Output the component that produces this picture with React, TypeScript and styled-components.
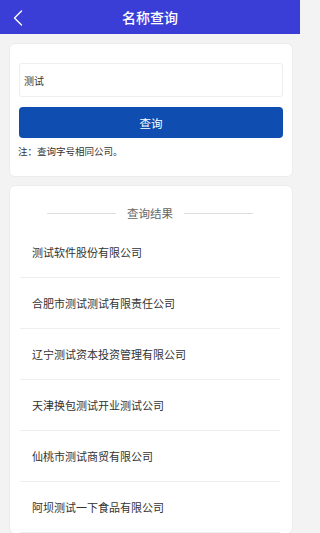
import React from "react";
import styled, { createGlobalStyle } from "styled-components";

const Global = createGlobalStyle`
  html, body { margin: 0; padding: 0; background: #f3f3f3; overflow: hidden; }
  body { font-family: "Noto Sans CJK SC", "Noto Sans", sans-serif; }
  * { box-sizing: border-box; }
`;

const Page = styled.div`
  width: 300px;
  height: 533px;
  overflow: hidden;
  background: #f3f3f3;
`;

const Header = styled.header`
  height: 34px;
  background: #3a3ed6;
  display: flex;
  align-items: center;
  justify-content: center;
  position: relative;
`;

const Back = styled.button`
  position: absolute;
  left: 10px;
  top: 9px;
  width: 16px;
  height: 17px;
  padding: 0;
  border: none;
  background: transparent;
  display: flex;
  align-items: center;
  justify-content: center;
`;

const Title = styled.h1`
  margin: 0;
  color: #fff;
  font-size: 14px;
  font-weight: 500;
  line-height: 34px;
`;

const Main = styled.main`
  padding: 9px 7px 0 9px;
  display: flex;
  flex-direction: column;
  gap: 8px;
`;

const Card = styled.section<{ $pad: string }>`
  background: #fff;
  border-radius: 6px;
  border: 1px solid #ececec;
  padding: ${(p) => p.$pad};
`;

const Input = styled.div`
  height: 34px;
  border: 1px solid #eeeeee;
  border-radius: 3px;
  display: flex;
  align-items: center;
  padding-left: 4px;
  font-size: 10px;
  color: #333;
`;

const SearchButton = styled.button`
  margin-top: 10px;
  width: 100%;
  height: 31px;
  border: none;
  border-radius: 4px;
  background: #0f4db0;
  color: #fff;
  font-family: inherit;
  font-size: 11.5px;
  display: flex;
  align-items: center;
  justify-content: center;
`;

const Note = styled.p`
  margin: 7px 0 0 -1px;
  font-size: 9.5px;
  line-height: 13px;
  color: #333;
`;

const SectionTitle = styled.div`
  display: flex;
  align-items: center;
  justify-content: center;
  gap: 11px;
  height: 16px;
  font-size: 11.5px;
  color: #666;
`;

const Rule = styled.span`
  width: 69px;
  height: 1px;
  background: #dddddd;
`;

const List = styled.ul`
  list-style: none;
  margin: 6px 0 0;
  padding: 0;
`;

const Item = styled.li`
  height: 51px;
  display: flex;
  align-items: center;
  padding-left: 12px;
  border-bottom: 1px solid #eeeeee;
  font-size: 11px;
  color: #333;
`;

const companies = [
  "测试软件股份有限公司",
  "合肥市测试测试有限责任公司",
  "辽宁测试资本投资管理有限公司",
  "天津换包测试开业测试公司",
  "仙桃市测试商贸有限公司",
  "阿坝测试一下食品有限公司",
];

export default function App() {
  return (
    <Page>
      <Global />
      <Header>
        <Back aria-label="返回">
          <svg width="10" height="16" viewBox="0 0 10 16">
            <path d="M8.5 1 L1.5 8 L8.5 15" fill="none" stroke="#fff" strokeWidth="1.4" strokeLinecap="round" strokeLinejoin="round" />
          </svg>
        </Back>
        <Title>名称查询</Title>
      </Header>
      <Main>
        <Card $pad="19px 9px 18px 9px">
          <Input>测试</Input>
          <SearchButton>查询</SearchButton>
          <Note>注：查询字号相同公司。</Note>
        </Card>
        <Card $pad="19px 12px 0 10px">
          <SectionTitle>
            <Rule />
            <span>查询结果</span>
            <Rule />
          </SectionTitle>
          <List>
            {companies.map((c) => (
              <Item key={c}>{c}</Item>
            ))}
          </List>
        </Card>
      </Main>
    </Page>
  );
}
